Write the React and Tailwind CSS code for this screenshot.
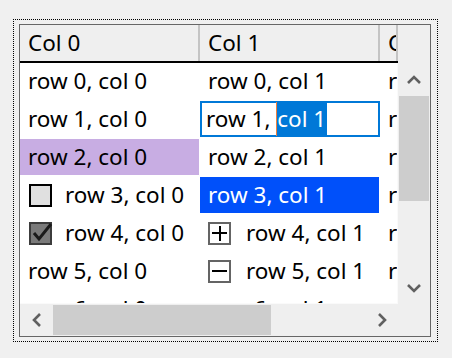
import React from 'react';

const font = { fontFamily: '"Noto Sans", "Open Sans", sans-serif' };

const Chevron = ({ dir }) => {
  const pts = {
    up: '1,8 7,2 13,8',
    down: '1,2 7,8 13,2',
    left: '8,1 2,7 8,13',
    right: '2,1 8,7 2,13',
  }[dir];
  const vertical = dir === 'up' || dir === 'down';
  return (
    <svg
      width={vertical ? 14 : 10}
      height={vertical ? 10 : 14}
      viewBox={vertical ? '0 0 14 10' : '0 0 10 14'}
    >
      <polyline points={pts} fill="none" stroke="#606060" strokeWidth="2.6" />
    </svg>
  );
};

const Checkbox = ({ checked }) =>
  checked ? (
    <svg width="26" height="26" viewBox="0 0 26 26" className="shrink-0 -mt-[3px] -mr-[3px]">
      <rect x="1" y="4" width="21" height="21" fill="#7a7a7a" stroke="#3c3c3c" strokeWidth="2" />
      <polyline points="5,14 10,20 22,5" fill="none" stroke="#1a1a1a" strokeWidth="3" />
    </svg>
  ) : (
    <div className="w-[23px] h-[23px] border-2 border-black bg-[#e0e0e0] shrink-0" />
  );

const PlusMinus = ({ plus }) => (
  <div className="w-[23px] h-[23px] border-2 border-[#646464] bg-white shrink-0 flex items-center justify-center relative">
    <div className="w-[15px] h-[2px] bg-black" />
    {plus && <div className="absolute w-[2px] h-[15px] bg-black" />}
  </div>
);

const Cell = ({ children, bg = '', w = 'w-[180px]', pl = 'pl-[8px]' }) => (
  <div className={`${w} h-[38px] shrink-0`}>
    <div className={`h-[36px] w-[179px] flex items-center whitespace-nowrap overflow-hidden ${pl} ${bg}`}>
      {children}
    </div>
  </div>
);

const rows = [0, 1, 2, 3, 4, 5, 6];

export default function App() {
  return (
    <div className="w-[452px] h-[358px] bg-[#f0f0f0] pl-[13px] pt-[19px] text-[22.5px] text-black" style={font}>
      <div className="w-[425px] h-[323px] border border-dotted border-black pl-[5px] pt-[4px]">
        <div className="w-[412px] h-[313px] border border-[#666666] bg-[#efefef] grid grid-cols-[378px_32px] grid-rows-[279px_32px]">
          {/* table */}
          <div className="flex flex-col overflow-hidden">
            <div className="h-[38px] flex shrink-0 border-b-2 border-black whitespace-nowrap">
              <div className="w-[180px] flex items-center pl-[8px] border-r-2 border-[#c4c4c4] shrink-0">Col 0</div>
              <div className="w-[180px] flex items-center pl-[8px] border-r-2 border-[#c4c4c4] shrink-0">Col 1</div>
              <div className="w-[18px] flex items-center pl-[8px] overflow-hidden border-r-2 border-[#c4c4c4] shrink-0">Col 2</div>
            </div>
            <div className="flex-1 bg-white overflow-hidden border-r border-b border-[#fafafa]">
              {rows.map((r) => (
                <div key={r} className="flex h-[38px]">
                  {r === 2 ? (
                    <Cell bg="bg-[#c8ade3]">row 2, col 0</Cell>
                  ) : r === 3 || r === 4 ? (
                    <Cell pl="pl-[9px]">
                      <Checkbox checked={r === 4} />
                      <span className="ml-[13px]">row {r}, col 0</span>
                    </Cell>
                  ) : (
                    <Cell>row {r}, col 0</Cell>
                  )}
                  {r === 1 ? (
                    <div className="w-[180px] h-[38px] shrink-0">
                      <div className="h-[36px] w-[180px] border-2 border-[#0078d7] flex items-center pl-[4px] whitespace-nowrap">
                        <span>row 1,&nbsp;</span>
                        <span className="border-l border-[#f0803c] bg-[#0078d7] text-white pr-[1px]">col 1</span>
                      </div>
                    </div>
                  ) : r === 3 ? (
                    <Cell bg="bg-[#0050fa] text-white">row 3, col 1</Cell>
                  ) : r === 4 || r === 5 ? (
                    <Cell>
                      <PlusMinus plus={r === 4} />
                      <span className="ml-[15px]">row {r}, col 1</span>
                    </Cell>
                  ) : (
                    <Cell>row {r}, col 1</Cell>
                  )}
                  <div className="w-[18px] h-[36px] flex items-center pl-[8px] overflow-hidden whitespace-nowrap shrink-0">
                    row {r}, col 2
                  </div>
                </div>
              ))}
            </div>
          </div>

          {/* vertical scrollbar */}
          <div className="flex flex-col">
            <div className="h-[38px] shrink-0" />
            <div className="flex-1 flex flex-col">
              <div className="h-[33px] flex items-center justify-center shrink-0">
                <Chevron dir="up" />
              </div>
              <div className="h-[105px] mx-[1px] bg-[#cdcdcd] shrink-0" />
              <div className="flex-1" />
              <div className="h-[33px] flex items-center justify-center shrink-0">
                <Chevron dir="down" />
              </div>
            </div>
          </div>

          {/* horizontal scrollbar */}
          <div className="flex">
            <div className="w-[33px] flex items-center justify-center shrink-0">
              <Chevron dir="left" />
            </div>
            <div className="w-[218px] my-[1px] bg-[#cdcdcd] shrink-0" />
            <div className="flex-1" />
            <div className="w-[33px] flex items-center justify-center shrink-0">
              <Chevron dir="right" />
            </div>
          </div>
          <div />
        </div>
      </div>
    </div>
  );
}
